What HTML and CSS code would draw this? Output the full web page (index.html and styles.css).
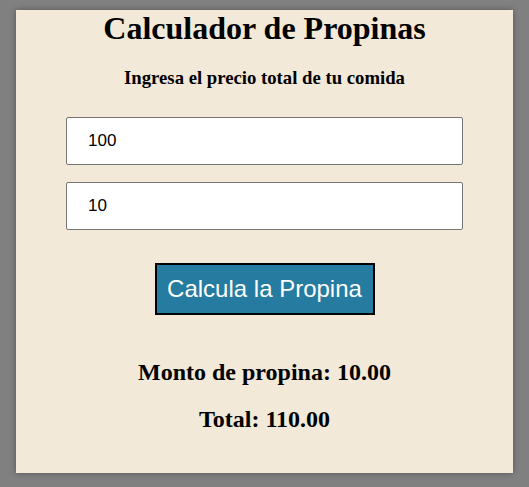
FILE: index.html
```html
<!DOCTYPE html>
<html lang="es">
<head>
<meta charset="utf-8">
<title>Calculador de Propinas</title>
<link rel="stylesheet" href="styles.css">
</head>
<body>
<div class="card">
  <h1 class="title">Calculador de Propinas</h1>
  <h3 class="subtitle">Ingresa el precio total de tu comida</h3>
  <div class="fields">
    <input class="field" type="text" value="100">
    <input class="field" type="text" value="10">
  </div>
  <button class="calc-btn">Calcula la Propina</button>
  <h2 class="result result-first">Monto de propina: 10.00</h2>
  <h2 class="result">Total: 110.00</h2>
</div>
</body>
</html>
```
FILE: styles.css
```css
html, body {
  margin: 0;
  padding: 0;
}
body {
  background: #808080;
  font-family: "Liberation Serif", "Times New Roman", serif;
  padding: 10px 16px 14px;
}
.card {
  background: #f2e9d8;
  height: 463px;
  text-align: center;
  box-shadow: 0 0 6px rgba(0,0,0,0.35);
  display: flex;
  flex-direction: column;
  align-items: center;
}
.title {
  margin: 0;
  font-size: 32px;
  font-weight: bold;
}
.subtitle {
  margin: 20px 0 0;
  font-size: 18.72px;
  font-weight: bold;
}
.fields {
  margin-top: 28px;
  display: flex;
  flex-direction: column;
  gap: 17px;
}
.field {
  box-sizing: border-box;
  width: 397px;
  height: 48px;
  border: 1px solid #767676;
  border-radius: 2px;
  padding: 0 21px;
  font-family: "Liberation Sans", Arial, sans-serif;
  font-size: 17px;
  color: #000;
  background: #fff;
}
.calc-btn {
  margin-top: 33px;
  box-sizing: border-box;
  width: 220px;
  height: 52px;
  border: 2px solid #000;
  background: #257ba0;
  color: #fff;
  font-family: "Liberation Sans", Arial, sans-serif;
  font-size: 24px;
  padding: 0;
}
.result {
  margin: 20px 0 0;
  font-size: 24px;
  font-weight: bold;
}
.result-first {
  margin-top: 44px;
}
```
